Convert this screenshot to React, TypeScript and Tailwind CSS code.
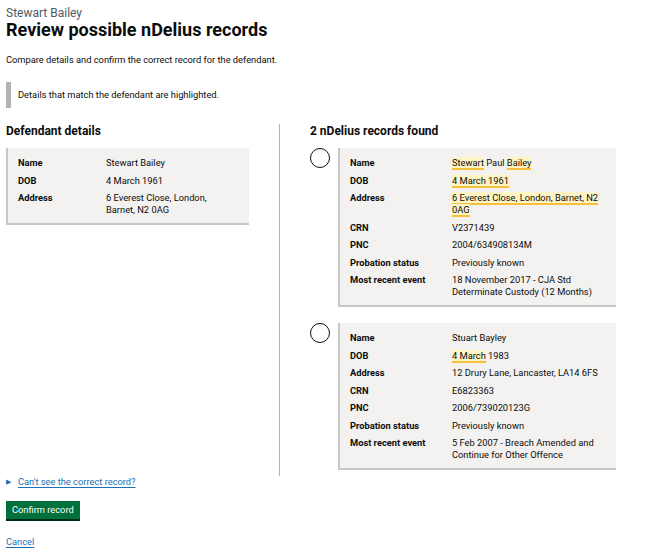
import React from "react";

const H = ({ children }: { children: React.ReactNode }) => (
  <span className="bg-[#fff4c4] border-b-2 border-[#f6bf3c]">{children}</span>
);

type Row = { label: string; value: React.ReactNode };

function Card({ rows, labelW, valueW, width }: { rows: Row[]; labelW: string; valueW: string; width: string }) {
  return (
    <div className={`${width} bg-[#f3f2f1] border-l-2 border-b-2 border-[#c5c7c8] pl-[10px] pr-[8px] pt-[9px] pb-[7px] flex flex-col gap-[5.5px]`}>
      {rows.map((r) => (
        <div key={r.label} className="flex leading-[12px]">
          <div className={`${labelW} shrink-0 font-bold`}>{r.label}</div>
          <div className={`${valueW} shrink-0`}>{r.value}</div>
        </div>
      ))}
    </div>
  );
}

function Radio() {
  return <div className="w-[20px] h-[20px] rounded-full border-[1.5px] border-[#0b0c0c] bg-white shrink-0" />;
}

export default function App() {
  const defendant: Row[] = [
    { label: "Name", value: "Stewart Bailey" },
    { label: "DOB", value: "4 March 1961" },
    { label: "Address", value: "6 Everest Close, London, Barnet, N2 0AG" },
  ];
  const rec1: Row[] = [
    { label: "Name", value: <><H>Stewart</H> Paul <H>Bailey</H></> },
    { label: "DOB", value: <H>4 March 1961</H> },
    { label: "Address", value: <H>6 Everest Close, London, Barnet, N2 0AG</H> },
    { label: "CRN", value: "V2371439" },
    { label: "PNC", value: "2004/634908134M" },
    { label: "Probation status", value: "Previously known" },
    { label: "Most recent event", value: "18 November 2017 - CJA Std Determinate Custody (12 Months)" },
  ];
  const rec2: Row[] = [
    { label: "Name", value: "Stuart Bayley" },
    { label: "DOB", value: <><H>4 March</H> 1983</> },
    { label: "Address", value: "12 Drury Lane, Lancaster, LA14 6FS" },
    { label: "CRN", value: "E6823363" },
    { label: "PNC", value: "2006/739020123G" },
    { label: "Probation status", value: "Previously known" },
    { label: "Most recent event", value: "5 Feb 2007 - Breach Amended and Continue for Other Offence" },
  ];

  return (
    <div className="bg-white text-[#0b0c0c] text-[9.3px] px-[6px] pt-[6px] pb-[10px]" style={{ fontFamily: "Roboto, 'Liberation Sans', sans-serif" }}>
      <div className="text-[12px] leading-[14px] text-[#505a5f]">Stewart Bailey</div>
      <h1 className="text-[18px] leading-[20px] font-bold">Review possible nDelius records</h1>
      <p className="mt-[14px] leading-[12px]">Compare details and confirm the correct record for the defendant.</p>
      <div className="mt-[16px] border-l-[5px] border-[#b1b4b6] pl-[7px] py-[7px] leading-[12px]">
        Details that match the defendant are highlighted.
      </div>

      <div className="mt-[16px] flex">
        <div className="w-[274px] pr-[30px] border-r border-[#b1b4b6] pb-[6px]">
          <h2 className="text-[12px] leading-[14px] font-bold">Defendant details</h2>
          <div className="mt-[10px]">
            <Card rows={defendant} labelW="w-[88px]" valueW="w-[130px]" width="w-[243px]" />
          </div>
        </div>
        <div className="pl-[30px] pb-[6px]">
          <h2 className="text-[12px] leading-[14px] font-bold">2 nDelius records found</h2>
          <div className="mt-[10px] flex flex-col gap-[16px]">
            <div className="flex gap-[8px]">
              <Radio />
              <Card rows={rec1} labelW="w-[102px]" valueW="w-[158px]" width="w-[278px]" />
            </div>
            <div className="flex gap-[8px]">
              <Radio />
              <Card rows={rec2} labelW="w-[102px]" valueW="w-[158px]" width="w-[278px]" />
            </div>
          </div>
        </div>
      </div>

      <div className="flex items-center leading-[12px]">
        <span className="text-[#1d70b8] text-[7px] w-[12px]">▶</span>
        <a href="#" className="text-[#1d70b8] underline underline-offset-[1.5px]">Can't see the correct record?</a>
      </div>

      <button className="mt-[13px] bg-[#00703c] text-white px-[6px] h-[18px] leading-[18px] shadow-[0_2px_0_#002d18]">
        Confirm record
      </button>

      <div className="mt-[17px] leading-[12px]">
        <a href="#" className="text-[#1d70b8] underline underline-offset-[1.5px]">Cancel</a>
      </div>
    </div>
  );
}
